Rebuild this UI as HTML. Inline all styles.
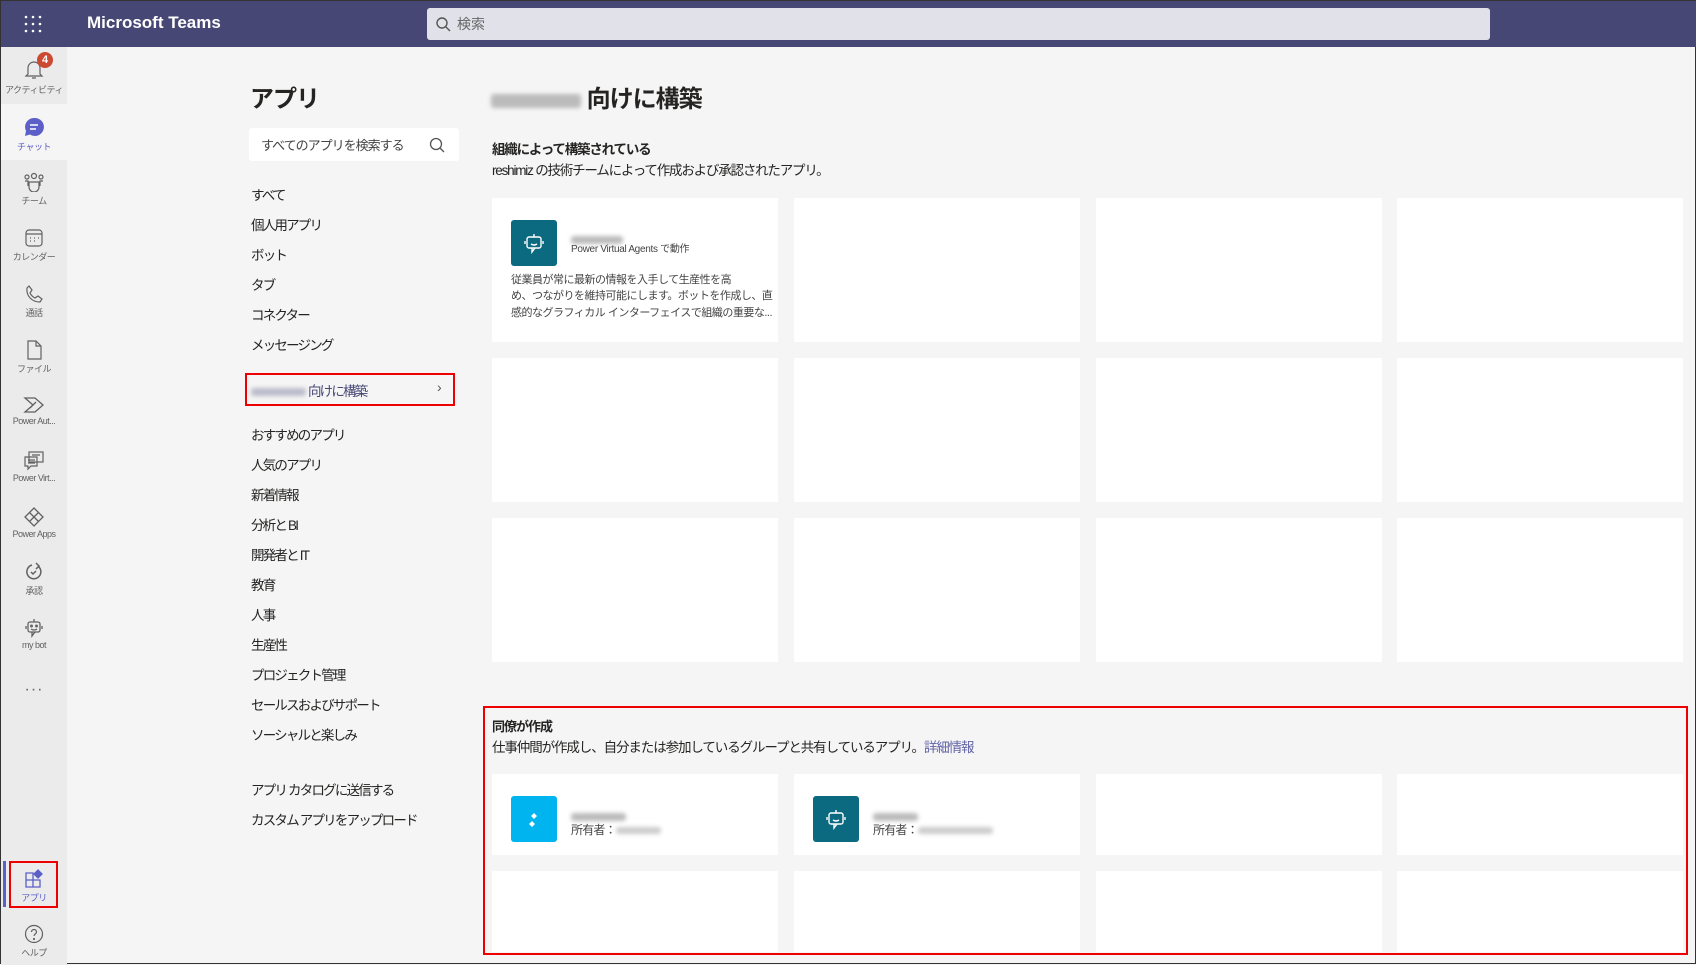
<!DOCTYPE html>
<html><head><meta charset="utf-8"><style>
*{margin:0;padding:0;box-sizing:border-box}
body{width:1696px;height:964px;overflow:hidden;background:#f5f5f5;font-family:"Liberation Sans","Noto Sans CJK JP",sans-serif;color:#252423;position:relative;border:1px solid #333}
.abs{position:absolute}
.hdr{left:0;top:0;width:1696px;height:46px;background:#464775}
.rail{left:0;top:46px;width:66px;height:918px;background:#ebebeb}
.ri{position:absolute;left:0;width:66px;text-align:center;font-size:9px;color:#616161;letter-spacing:-0.5px}
.ri svg{display:block;margin:0 auto 2px}
.nav{left:250px;font-size:13.5px;letter-spacing:-1.8px;color:#252423}
.card{position:absolute;background:#fff;width:286px}
.blur{display:inline-block;background:#ccc;filter:blur(2px);border-radius:3px;vertical-align:middle}
.red{position:absolute;border:2px solid #e00}
</style></head><body>
<div class="abs hdr"></div>
<div class="abs" style="left:23px;top:14px;width:18px;height:18px">
<svg width="18" height="18" fill="#fff"><g><circle cx="2" cy="2" r="1.3"/><circle cx="9" cy="2" r="1.3"/><circle cx="16" cy="2" r="1.3"/><circle cx="2" cy="9" r="1.3"/><circle cx="9" cy="9" r="1.3"/><circle cx="16" cy="9" r="1.3"/><circle cx="2" cy="16" r="1.3"/><circle cx="9" cy="16" r="1.3"/><circle cx="16" cy="16" r="1.3"/></g></svg></div>
<div class="abs" style="left:86px;top:12px;color:#fff;font-size:17px;font-weight:bold">Microsoft Teams</div>
<div class="abs" style="left:426px;top:7px;width:1063px;height:32px;background:#e1e1ea;border-radius:3px"></div>
<svg class="abs" style="left:434px;top:15px" width="16" height="16" fill="none" stroke="#555" stroke-width="1.4"><circle cx="7" cy="7" r="5"/><path d="M11 11l4 4"/></svg>
<div class="abs" style="left:456px;top:13px;font-size:14px;color:#666">検索</div>

<div class="abs rail"></div>
<div class="abs" style="left:0;top:103px;width:66px;height:56px;background:#f5f5f5"></div>
<div class="ri" style="top:58px"><svg width="20" height="22" fill="none" stroke="#616161" stroke-width="1.2"><path d="M4 15V9a6 6 0 0112 0v6l2 2H2z M8 19h4"/></svg>アクティビティ</div>
<div class="abs" style="left:36px;top:51px;width:16px;height:16px;border-radius:8px;background:#cc4a31;color:#fff;font-size:11px;font-weight:bold;text-align:center;line-height:16px">4</div>
<div class="ri" style="top:115px;color:#5b5fc7"><svg width="22" height="22"><path d="M11 2a9 9 0 00-8 13l-1 5 5-1.5A9 9 0 1011 2z" fill="#5b5fc7"/><path d="M7 9h8M7 13h6" stroke="#fff" stroke-width="1.5"/></svg>チャット</div>
<div class="ri" style="top:171px"><svg width="22" height="20" fill="none" stroke="#616161" stroke-width="1.2"><circle cx="11" cy="4" r="2.5"/><circle cx="4" cy="5" r="2"/><circle cx="18" cy="5" r="2"/><path d="M6 10h10v5a5 5 0 01-10 0zM2 9h3v5M20 9h-3v5"/></svg>チーム</div>
<div class="ri" style="top:227px"><svg width="20" height="20" fill="none" stroke="#616161" stroke-width="1.2"><rect x="2" y="2" width="16" height="16" rx="3"/><path d="M2 6h16M6 10h1M10 10h1M14 10h1M6 13h1M10 13h1"/></svg>カレンダー</div>
<div class="ri" style="top:283px"><svg width="20" height="20" fill="none" stroke="#616161" stroke-width="1.2"><path d="M5 2l3 4-2 3c1 2 3 4 5 5l3-2 4 3-2 3C8 18 2 12 3 4z"/></svg>通話</div>
<div class="ri" style="top:339px"><svg width="20" height="20" fill="none" stroke="#616161" stroke-width="1.2"><path d="M4 1h8l5 5v13H4zM12 1v5h5"/></svg>ファイル</div>
<div class="ri" style="top:395px"><svg width="22" height="18" fill="none" stroke="#616161" stroke-width="1.3"><path d="M2 2h10l8 7-8 7H2l8-7zM7 12l6-6"/></svg>Power Aut...</div>
<div class="ri" style="top:450px"><svg width="22" height="20" fill="none" stroke="#616161" stroke-width="1.2"><rect x="6" y="1" width="14" height="10"/><path d="M2 6h12v9H8l-3 3v-3H2zM9 4h8M5 9h7M5 12h7"/></svg>Power Virt...</div>
<div class="ri" style="top:506px"><svg width="22" height="20" fill="none" stroke="#616161" stroke-width="1.3"><path d="M11 1l9 9-9 9-9-9zM6.5 5.5l9 9M15.5 5.5l-9 9"/></svg>Power Apps</div>
<div class="ri" style="top:561px"><svg width="20" height="20" fill="none" stroke="#616161" stroke-width="1.5"><path d="M15 5a7 7 0 11-7-2M12 1l3 3-3 3M7 10l2 2 3-3"/></svg>承認</div>
<div class="ri" style="top:617px"><svg width="20" height="20" fill="none" stroke="#616161" stroke-width="1.3"><path d="M10 1v3"/><rect x="4" y="4" width="12" height="10" rx="2"/><path d="M7 11q3 2 6 0M2 8v3M18 8v3M8 14v4l3-4"/><circle cx="7.5" cy="8" r=".8"/><circle cx="12.5" cy="8" r=".8"/></svg>my bot</div>
<div class="ri" style="top:680px;font-size:16px;letter-spacing:1px">···</div>
<div class="abs" style="left:2px;top:860px;width:3px;height:46px;background:#5b5fc7"></div>
<div class="ri" style="top:868px;color:#5b5fc7"><svg width="20" height="20" fill="none" stroke="#5b5fc7" stroke-width="1.3"><path d="M2 4h7v7H2zM2 11h7v7H2zM9 11h7v7H9z"/><path d="M14 1l4 4-4 4-4-4z" fill="#5b5fc7"/></svg>アプリ</div>
<div class="red" style="left:8px;top:860px;width:49px;height:47px"></div>
<div class="ri" style="top:923px"><svg width="20" height="20" fill="none" stroke="#616161" stroke-width="1.2"><circle cx="10" cy="10" r="8.5"/><path d="M7.5 8a2.5 2.5 0 115 0c0 2-2.5 2-2.5 4"/><circle cx="10" cy="15" r=".5"/></svg>ヘルプ</div>

<div class="abs" style="left:249px;top:78px;font-size:24px;font-weight:bold;letter-spacing:-1px">アプリ</div>
<div class="abs" style="left:248px;top:127px;width:210px;height:33px;background:#fff;border-radius:3px"></div>
<div class="abs" style="left:260px;top:134px;font-size:13px;letter-spacing:-1px;color:#444">すべてのアプリを検索する</div>
<svg class="abs" style="left:428px;top:136px" width="16" height="16" fill="none" stroke="#555" stroke-width="1.3"><circle cx="7" cy="7" r="5.5"/><path d="M11 11l4 4"/></svg>
<div class="abs nav" style="top:183px">すべて</div>
<div class="abs nav" style="top:213px">個人用アプリ</div>
<div class="abs nav" style="top:243px">ボット</div>
<div class="abs nav" style="top:273px">タブ</div>
<div class="abs nav" style="top:303px">コネクター</div>
<div class="abs nav" style="top:333px">メッセージング</div>
<div class="abs nav" style="top:379px;color:#464775"><span class="blur" style="width:55px;height:8px;background:#bbc"></span> 向けに構築</div>
<div class="abs" style="left:436px;top:378px;color:#555;font-size:14px">›</div>
<div class="red" style="left:244px;top:372px;width:210px;height:33px"></div>
<div class="abs nav" style="top:423px">おすすめのアプリ</div>
<div class="abs nav" style="top:453px">人気のアプリ</div>
<div class="abs nav" style="top:483px">新着情報</div>
<div class="abs nav" style="top:513px">分析と BI</div>
<div class="abs nav" style="top:543px">開発者と IT</div>
<div class="abs nav" style="top:573px">教育</div>
<div class="abs nav" style="top:603px">人事</div>
<div class="abs nav" style="top:633px">生産性</div>
<div class="abs nav" style="top:663px">プロジェクト管理</div>
<div class="abs nav" style="top:693px">セールスおよびサポート</div>
<div class="abs nav" style="top:723px">ソーシャルと楽しみ</div>
<div class="abs nav" style="top:778px">アプリ カタログに送信する</div>
<div class="abs nav" style="top:808px">カスタム アプリをアップロード</div>

<div class="abs" style="left:490px;top:78px;font-size:24px;font-weight:bold;letter-spacing:-1px"><span class="blur" style="width:90px;height:14px;background:#bbb"></span> 向けに構築</div>
<div class="abs" style="left:491px;top:137px;font-size:13.5px;font-weight:bold;letter-spacing:-1.2px">組織によって構築されている</div>
<div class="abs" style="left:491px;top:158px;font-size:13.5px;letter-spacing:-1.2px">reshimiz の技術チームによって作成および承認されたアプリ。</div>

<div class="card" style="left:491px;top:197px;height:144px">
<div class="abs" style="left:19px;top:22px;width:46px;height:46px;background:#0b6a80;border-radius:3px"><svg width="46" height="46" fill="none" stroke="#fff" stroke-width="1.4"><path d="M23 14v3"/><rect x="16" y="17" width="14" height="11" rx="2"/><path d="M20 24q3 2 6 0M14 21v3M32 21v3M21 28v4l3-4"/></svg></div>
<div class="abs" style="left:79px;top:33px"><span class="blur" style="width:52px;height:8px;background:#bbb"></span></div>
<div class="abs" style="left:79px;top:42px;font-size:10px;color:#444;letter-spacing:-0.3px">Power Virtual Agents で動作</div>
<div class="abs" style="left:19px;top:74px;font-size:11px;color:#444;line-height:16.4px;white-space:nowrap;letter-spacing:-0.5px">従業員が常に最新の情報を入手して生産性を高<br>め、つながりを維持可能にします。ボットを作成し、直<br>感的なグラフィカル インターフェイスで組織の重要な...</div>
</div>
<div class="card" style="left:793px;top:197px;height:144px"></div>
<div class="card" style="left:1095px;top:197px;height:144px"></div>
<div class="card" style="left:1396px;top:197px;height:144px"></div>
<div class="card" style="left:491px;top:357px;height:144px"></div>
<div class="card" style="left:793px;top:357px;height:144px"></div>
<div class="card" style="left:1095px;top:357px;height:144px"></div>
<div class="card" style="left:1396px;top:357px;height:144px"></div>
<div class="card" style="left:491px;top:517px;height:144px"></div>
<div class="card" style="left:793px;top:517px;height:144px"></div>
<div class="card" style="left:1095px;top:517px;height:144px"></div>
<div class="card" style="left:1396px;top:517px;height:144px"></div>

<div class="abs" style="left:491px;top:715px;font-size:13px;font-weight:bold;letter-spacing:-1px">同僚が作成</div>
<div class="abs" style="left:491px;top:735px;font-size:13.5px;letter-spacing:-1.1px">仕事仲間が作成し、自分または参加しているグループと共有しているアプリ。<span style="color:#6264a7">詳細情報</span></div>
<div class="card" style="left:491px;top:773px;height:81px">
<div class="abs" style="left:19px;top:22px;width:46px;height:46px;background:#00b4f0;border-radius:3px"><svg width="46" height="46" fill="#fff"><path d="M23 17l3 3-3 3-3-3zM21 25l3 3-3 3-3-3z"/></svg></div>
<div class="abs" style="left:79px;top:34px"><span class="blur" style="width:55px;height:8px;background:#bbb"></span></div>
<div class="abs" style="left:79px;top:47px;font-size:12px;color:#444;letter-spacing:-0.8px">所有者：<span class="blur" style="width:45px;height:7px;background:#ccc"></span></div>
</div>
<div class="card" style="left:793px;top:773px;height:81px">
<div class="abs" style="left:19px;top:22px;width:46px;height:46px;background:#0b6a80;border-radius:3px"><svg width="46" height="46" fill="none" stroke="#fff" stroke-width="1.4"><path d="M23 14v3"/><rect x="16" y="17" width="14" height="11" rx="2"/><path d="M20 24q3 2 6 0M14 21v3M32 21v3M21 28v4l3-4"/></svg></div>
<div class="abs" style="left:79px;top:34px"><span class="blur" style="width:45px;height:8px;background:#bbb"></span></div>
<div class="abs" style="left:79px;top:47px;font-size:12px;color:#444;letter-spacing:-0.8px">所有者：<span class="blur" style="width:75px;height:7px;background:#ccc"></span></div>
</div>
<div class="card" style="left:1095px;top:773px;height:81px"></div>
<div class="card" style="left:1396px;top:773px;height:81px"></div>
<div class="card" style="left:491px;top:870px;height:81px"></div>
<div class="card" style="left:793px;top:870px;height:81px"></div>
<div class="card" style="left:1095px;top:870px;height:81px"></div>
<div class="card" style="left:1396px;top:870px;height:81px"></div>
<div class="red" style="left:482px;top:705px;width:1205px;height:249px"></div>
</body></html>
